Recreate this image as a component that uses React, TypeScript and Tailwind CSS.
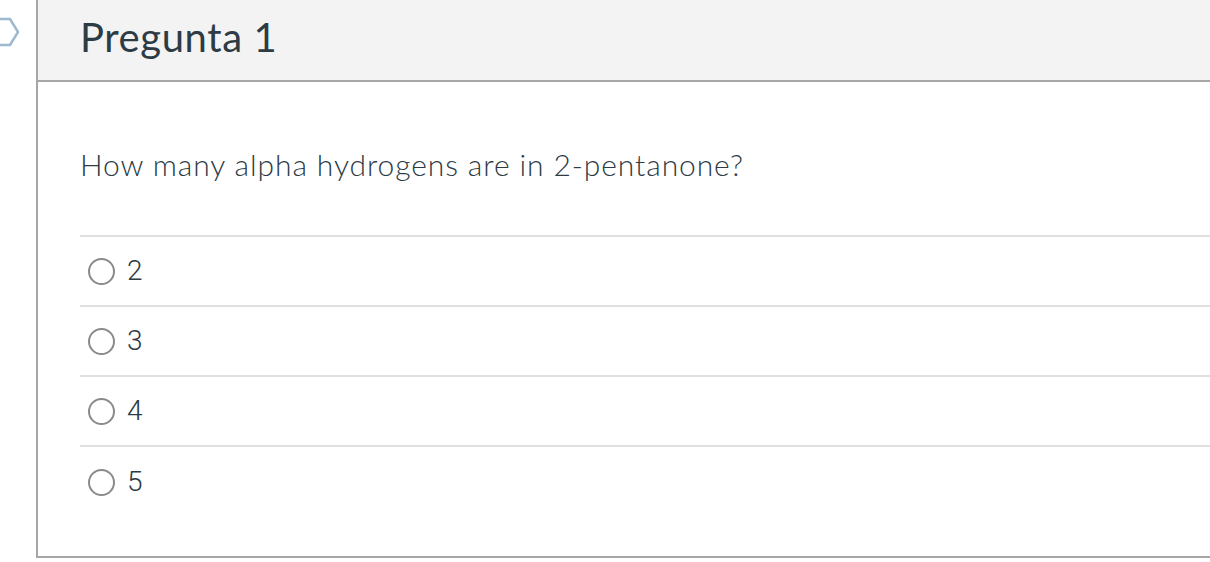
const OPTIONS = ['2', '3', '4', '5']

function NavArrow() {
  return (
    <svg width="24" height="40" viewBox="0 0 24 40" className="absolute left-0 top-[16px]" aria-hidden="true">
      <path d="M-6 3 L10 3 L18 16 L10 29 L-6 29" fill="none" stroke="#9fbad0" strokeWidth="2.5" strokeLinejoin="round" />
    </svg>
  )
}

function Radio() {
  return <span className="inline-block h-[27px] w-[27px] shrink-0 rounded-full border-[2.5px] border-[#8a8a8a] bg-white" />
}

export default function App() {
  return (
    <div className="relative h-[562px] w-[1210px] overflow-hidden bg-white font-['Lato','Noto_Sans',sans-serif]">
      <NavArrow />
      <div className="ml-[36px] flex h-[558px] flex-col border-b-2 border-l-2 border-[#a6a6a6]">
        <div className="flex h-[82px] shrink-0 items-center border-b-2 border-[#a6a6a6] bg-[#f3f3f3] pl-[42px]">
          <h2 className="pb-[6px] text-[40px] font-normal tracking-[0.6px] text-[#2d3b45]">Pregunta 1</h2>
        </div>
        <div className="pl-[42px]">
          <p className="mt-[63px] text-[30px] font-light leading-[38px] tracking-[0.9px] text-[#2d3b45]">
            How many alpha hydrogens are in 2-pentanone?
          </p>
          <div className="mt-[52px] border-t-2 border-[#e0e0e0]">
            {OPTIONS.map((option, index) => (
              <div
                key={option}
                className={`flex h-[70px] items-center gap-[12px] pl-[8px] ${index < OPTIONS.length - 1 ? 'border-b-2 border-[#e0e0e0]' : ''}`}
              >
                <Radio />
                <span className="font-['Roboto',sans-serif] text-[28px] font-light text-[#2d3b45]">{option}</span>
              </div>
            ))}
          </div>
        </div>
      </div>
    </div>
  )
}
